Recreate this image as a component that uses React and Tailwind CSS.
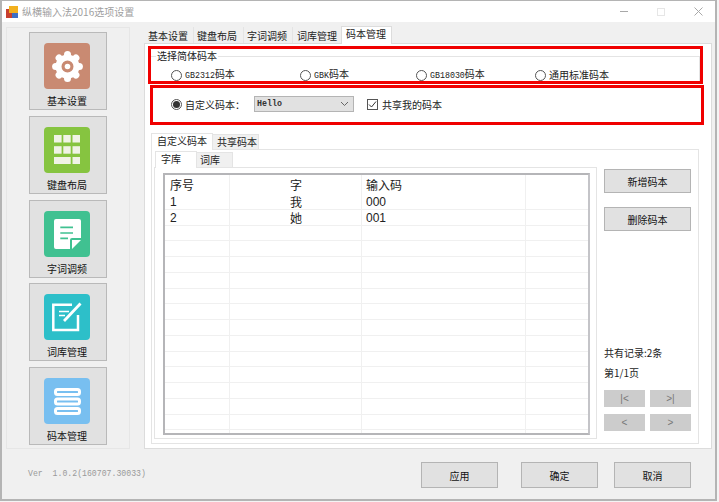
import React from "react";

const FONT = "[font-family:'Noto_Sans_CJK_SC','Liberation_Sans',sans-serif]";

function GearIcon() {
  const teeth = [0, 45, 90, 135, 180, 225, 270, 315];
  return (
    <svg width="31" height="31" viewBox="0 0 31 31" fill="#fff">
      {teeth.map((a) => (
        <circle key={a} cx="15.5" cy="3.6" r="3.5" transform={`rotate(${a} 15.5 15.5)`} />
      ))}
      <path
        fillRule="evenodd"
        d="M15.5 3.5a12 12 0 1 0 0 24a12 12 0 1 0 0-24zM15.5 9.5a6 6 0 1 1 0 12a6 6 0 1 1 0-12z"
      />
      <circle cx="15.5" cy="15.5" r="2.8" />
    </svg>
  );
}

function KeyboardIcon() {
  return (
    <svg width="26" height="29" viewBox="0 0 26 29" fill="#f0f3e6">
      <rect x="0" y="0" width="7.6" height="7.5" />
      <rect x="9.3" y="0" width="7.4" height="7.5" />
      <rect x="18.5" y="0" width="7.5" height="7.5" />
      <rect x="0" y="11.2" width="7.6" height="7.5" />
      <rect x="9.3" y="11.2" width="7.4" height="7.5" />
      <rect x="18.5" y="11.2" width="7.5" height="7.5" />
      <rect x="0" y="22" width="16.7" height="7" />
      <rect x="18.5" y="22" width="7.5" height="7" />
    </svg>
  );
}

function NoteIcon() {
  return (
    <svg width="27" height="30" viewBox="0 0 27 30">
      <path d="M2 0H25a2 2 0 0 1 2 2V19H18a2 2 0 0 0-2 2V30H2a2 2 0 0 1-2-2V2a2 2 0 0 1 2-2z" fill="#fff" />
      <path d="M18 21H27L18 30z" fill="#fff" />
      <path d="M6.3 8.3H19M6.3 14H19M6.3 19.3H14" stroke="#40c191" strokeWidth="1.7" />
    </svg>
  );
}

function EditIcon() {
  return (
    <svg width="30" height="30" viewBox="0 0 30 30" fill="none" stroke="#fff">
      <path d="M20 2.8H1.3V28H26V13" strokeWidth="2.5" />
      <path d="M12 19L28.5 1.5" strokeWidth="2.8" />
      <path d="M7 9.5H17M7 13.5H13" strokeWidth="1.4" />
    </svg>
  );
}

function StackIcon() {
  return (
    <svg width="27" height="27" viewBox="0 0 27 27" fill="none" stroke="#fff" strokeWidth="3">
      <rect x="1.5" y="1.5" width="24" height="5" rx="2" />
      <rect x="1.5" y="11" width="24" height="5" rx="2" />
      <rect x="1.5" y="20.5" width="24" height="5" rx="2" />
    </svg>
  );
}

function NavButton({ label, color, icon }) {
  return (
    <div className="flex h-[78px] w-[78px] flex-col items-center border border-[#b9b9b9] bg-[#e1e1e1] pr-[2px] pt-[10px]">
      <div className={`flex h-[46px] w-[46px] items-center justify-center rounded-[4px] ${color}`}>{icon}</div>
      <span className="mt-[4px] text-[10px] leading-[16px] text-[#111]">{label}</span>
    </div>
  );
}

function Radio({ checked }) {
  return (
    <span className="flex h-[11px] w-[11px] shrink-0 items-center justify-center rounded-full border border-[#555] bg-white">
      {checked && <span className="h-[7px] w-[7px] rounded-full bg-[#333]" />}
    </span>
  );
}

function CodeRadio({ code, label, width }) {
  return (
    <div className={`flex items-center gap-[3px] ${width}`}>
      <Radio />
      <span className="text-[10px] leading-[14px] text-[#222]">
        <span className="font-['Liberation_Mono',monospace] text-[8.3px]">{code}</span>
        {label}
      </span>
    </div>
  );
}

function GrayButton({ children, className }) {
  return (
    <div className={`flex items-center justify-center border border-[#b4b4b4] bg-[#e1e1e1] text-[10px] text-[#111] ${className}`}>
      {children}
    </div>
  );
}

function PageButton({ children }) {
  return (
    <div className="flex h-[17px] w-[41px] items-center justify-center bg-[#cccccc] font-['Liberation_Sans',sans-serif] text-[10px] text-[#777]">
      {children}
    </div>
  );
}

const rows = [
  ["1", "我", "000"],
  ["2", "她", "001"],
  ...Array.from({ length: 14 }, () => ["", "", ""]),
];

function CodeTable() {
  return (
    <div className="h-[262px] w-[427px] overflow-hidden border-2 border-[#b5b5b8] border-r-[#c4c4c8] bg-white text-[12px] text-[#222]">
      <div className="flex h-[19px] items-stretch">
        <div className="flex w-[65px] items-center border-r border-[#f0f0f0] pl-[5px]">序号</div>
        <div className="flex w-[132px] items-center border-r border-[#f0f0f0] pl-[60px]">字</div>
        <div className="flex w-[164px] items-center border-r border-[#f0f0f0] pl-[4px]">输入码</div>
      </div>
      {rows.map((row, i) => (
        <div key={i} className="flex h-[15.75px] border-b border-[#f0f0f0]">
          <div className="flex w-[65px] items-center border-r border-[#f0f0f0] pl-[5px] pt-px font-['Liberation_Sans',sans-serif]">{row[0]}</div>
          <div className="flex w-[132px] items-center border-r border-[#f0f0f0] pl-[60px] pt-px">{row[1]}</div>
          <div className="flex w-[164px] items-center border-r border-[#f0f0f0] pl-[4px] pt-px font-['Liberation_Sans',sans-serif]">{row[2]}</div>
        </div>
      ))}
    </div>
  );
}

export default function App() {
  return (
    <div className={`relative h-[502px] w-[719px] overflow-hidden bg-[#f4f4f4] ${FONT}`}>
      <div className="flex h-[501px] w-[717px] flex-col border-b-2 border-l-2 border-r-2 border-t border-[#b4b4b4] bg-[#f0f0f0]">
        {/* title bar */}
        <div className="flex h-[21px] shrink-0 items-center bg-white pl-[4px]">
          <svg width="12" height="12" viewBox="0 0 12 12">
            <rect x="0" y="3" width="6" height="9" fill="#c8402f" />
            <rect x="3" y="0" width="9" height="7" fill="#f2b01e" />
            <rect x="6" y="7" width="6" height="5" fill="#3d6fc4" />
          </svg>
          <span className="ml-[4px] text-[10px] text-[#a0a0a0]">纵横输入法2016选项设置</span>
          <div className="ml-auto flex items-center gap-[29px] pr-[12px]">
            <div className="h-px w-[8px] bg-[#a8a8a8]" />
            <div className="h-[8px] w-[8px] border border-[#e6e6e6]" />
            <svg width="9" height="9" viewBox="0 0 9 9" stroke="#a8a8a8" fill="none">
              <path d="M0.5 0.5L8.5 8.5M8.5 0.5L0.5 8.5" />
            </svg>
          </div>
        </div>

        {/* body */}
        <div className="flex h-[427px] shrink-0 pl-[4px] pt-[5px]">
          {/* left nav */}
          <div className="flex h-[422px] w-[124px] shrink-0 flex-col items-center gap-[5.75px] border border-[#e6e6e6] pt-[4px]">
            <NavButton label="基本设置" color="bg-[#c98a72]" icon={<GearIcon />} />
            <NavButton label="键盘布局" color="bg-[#86c440]" icon={<KeyboardIcon />} />
            <NavButton label="字词调频" color="bg-[#40c191]" icon={<NoteIcon />} />
            <NavButton label="词库管理" color="bg-[#2dbfc9]" icon={<EditIcon />} />
            <NavButton label="码本管理" color="bg-[#78bff0]" icon={<StackIcon />} />
          </div>

          {/* main tabs */}
          <div className="ml-[14px] w-[568px]">
            <div className="flex h-[16px] items-end pl-[1px] text-[10px] leading-[14px] text-[#222]">
              <div className="h-[16px] w-[49px] border-r border-[#e4e4e4] pl-[3px] pt-[2px]">基本设置</div>
              <div className="h-[16px] w-[50px] border-r border-[#e4e4e4] pl-[3px] pt-[2px]">键盘布局</div>
              <div className="h-[16px] w-[49px] border-r border-[#e4e4e4] pl-[3px] pt-[2px]">字词调频</div>
              <div className="h-[16px] w-[48px] pl-[4px] pt-[2px]">词库管理</div>
              <div className="-mb-px h-[18px] w-[51px] border-x border-t border-[#dcdcdc] bg-white pl-[4px]">码本管理</div>
            </div>
            <div className="h-[406px] border border-[#dcdcdc] bg-white">
              {/* group box */}
              <div className="relative ml-[5px] mt-[12px] h-[27px] w-[550px] border border-[#e4e4e4]">
                <span className="absolute -top-[9px] left-[5px] bg-white px-[1px] text-[10px] leading-[16px] text-[#222]">选择简体码本</span>
                <div className="flex items-center pl-[20px] pt-[10px]">
                  <CodeRadio code="GB2312" label="码本" width="w-[129px]" />
                  <CodeRadio code="GBK" label="码本" width="w-[116px]" />
                  <CodeRadio code="GB18030" label="码本" width="w-[119px]" />
                  <div className="flex items-center gap-[3px]">
                    <Radio />
                    <span className="text-[10px] leading-[14px] text-[#222]">通用标准码本</span>
                  </div>
                </div>
              </div>
              {/* custom code row */}
              <div className="flex h-[42px] items-center pl-[26px] text-[10px] text-[#222]">
                <Radio checked />
                <span className="ml-[3px]">自定义码本：</span>
                <div className="ml-[9px] flex h-[16px] w-[100px] items-center justify-between border border-[#b4b4b4] bg-[#e1e1e1] pl-[2px] pr-[4px] font-['Liberation_Mono',monospace] text-[8.3px] font-bold text-[#333]">
                  Hello
                  <svg width="9" height="6" viewBox="0 0 9 6" fill="none" stroke="#666">
                    <path d="M1 1L4.5 4.5L8 1" />
                  </svg>
                </div>
                <div className="ml-[13px] flex h-[11px] w-[11px] items-center justify-center border border-[#555] bg-white">
                  <svg width="9" height="9" viewBox="0 0 9 9" fill="none" stroke="#333">
                    <path d="M1 4.5L3.5 7L8 1.5" />
                  </svg>
                </div>
                <span className="ml-[4px]">共享我的码本</span>
              </div>

              {/* inner tabs */}
              <div className="ml-[6px] mt-[8px] w-[548px]">
                <div className="flex h-[16px] items-end text-[10px] leading-[14px] text-[#222]">
                  <div className="-mb-px h-[17px] w-[62px] border-x border-t border-[#e4e4e4] bg-white pl-[5px]">自定义码本</div>
                  <div className="h-[15px] w-[46px] border-r border-t border-[#e4e4e4] bg-[#f0f0f0] pl-[4px]">共享码本</div>
                </div>
                <div className="flex h-[295px] border border-[#e4e4e4] pl-[2px] pt-[1px]">
                  <div className="w-[443px]">
                    <div className="flex h-[16px] items-end pl-px text-[10px] leading-[14px] text-[#222]">
                      <div className="-mb-px h-[17px] w-[42px] border-x border-t border-[#e4e4e4] bg-white pl-[5px]">字库</div>
                      <div className="h-[15px] w-[36px] border-r border-t border-[#e4e4e4] bg-[#f0f0f0] pl-[3px]">词库</div>
                    </div>
                    <div className="h-[272px] border border-[#e4e4e4] pl-[8px] pt-[5px]">
                      <CodeTable />
                    </div>
                  </div>

                  {/* right column */}
                  <div className="ml-[7px] flex w-[87px] flex-col pt-[18px] text-[10px] text-[#222]">
                    <GrayButton className="h-[24px] w-[87px]">新增码本</GrayButton>
                    <GrayButton className="mt-[14px] h-[24px] w-[87px]">删除码本</GrayButton>
                    <div className="mt-[114px] leading-[16px]">共有记录:2条</div>
                    <div className="mt-[4px] leading-[16px]">第1/1页</div>
                    <div className="mt-[9px] flex gap-[5px]">
                      <PageButton>|&lt;</PageButton>
                      <PageButton>&gt;|</PageButton>
                    </div>
                    <div className="mt-[7px] flex gap-[5px]">
                      <PageButton>&lt;</PageButton>
                      <PageButton>&gt;</PageButton>
                    </div>
                  </div>
                </div>
              </div>
            </div>
          </div>
        </div>

        {/* footer */}
        <div className="flex h-[50px] shrink-0 items-start pl-[26px] pt-[13px]">
          <span className="mt-[6px] w-[393px] whitespace-pre font-['Liberation_Mono',monospace] text-[8.2px] leading-[12px] text-[#9a9a9a]">Ver  1.0.2(160707.30033)</span>
          <GrayButton className="h-[26px] w-[77px]">应用</GrayButton>
          <GrayButton className="ml-[23px] h-[26px] w-[77px]">确定</GrayButton>
          <GrayButton className="ml-[16px] h-[26px] w-[77px]">取消</GrayButton>
        </div>
      </div>

      {/* red annotation boxes drawn over the screenshot */}
      <div className="absolute left-[148px] top-[46px] h-[38px] w-[555px] border-[3px] border-[#f00000]" />
      <div className="absolute left-[150px] top-[85px] h-[40px] w-[554px] border-[3px] border-[#f00000]" />
    </div>
  );
}
